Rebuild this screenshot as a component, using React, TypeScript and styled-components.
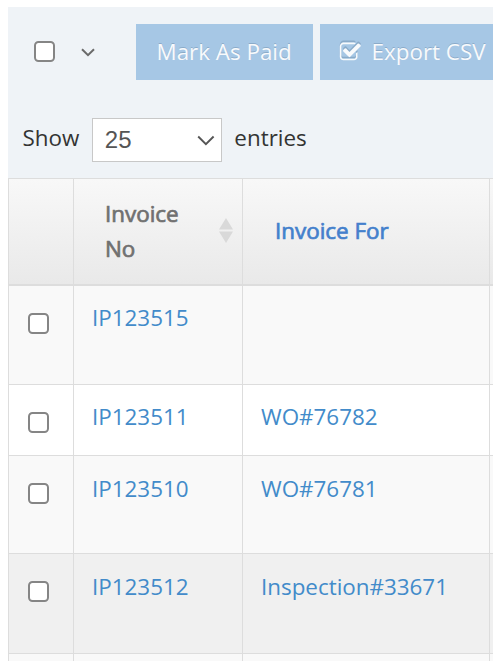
import { useState } from 'react';
import styled, { createGlobalStyle } from 'styled-components';

type Invoice = {
	no: string;
	invoiceFor: string;
	height: number;
	background: string;
};

const invoices: Invoice[] = [
	{ no: 'IP123515', invoiceFor: '', height: 99, background: '#f9f9f9' },
	{ no: 'IP123511', invoiceFor: 'WO#76782', height: 71.25, background: '#ffffff' },
	{ no: 'IP123510', invoiceFor: 'WO#76781', height: 98, background: '#f9f9f9' },
	{ no: 'IP123512', invoiceFor: 'Inspection#33671', height: 99.75, background: '#f0f0f0' },
];

function CheckSquareIcon() {
	return (
		<svg width="22.6" height="22.6" viewBox="0 0 1792 1792" fill="currentColor">
			<path d="M1472 930v318q0 119-84.5 203.5t-203.5 84.5h-832q-119 0-203.5-84.5t-84.5-203.5v-832q0-119 84.5-203.5t203.5-84.5h832q63 0 117 25 15 7 18 23 3 17-9 29l-49 49q-10 10-23 10-3 0-9-2-23-6-45-6h-832q-66 0-113 47t-47 113v832q0 66 47 113t113 47h832q66 0 113-47t47-113v-254q0-13 9-22l64-64q10-10 23-10 6 0 12 3 20 8 20 29zm231-489l-814 814q-24 24-57 24t-57-24l-430-430q-24-24-24-57t24-57l110-110q24-24 57-24t57 24l263 263 647-647q24-24 57-24t57 24l110 110q24 24 24 57t-24 57z" />
		</svg>
	);
}

function App() {
	const [selected, setSelected] = useState<string[]>([]);
	const allSelected = selected.length === invoices.length;

	const toggleAll = () => setSelected(allSelected ? [] : invoices.map((invoice) => invoice.no));
	const toggle = (no: string) =>
		setSelected((prev) => (prev.includes(no) ? prev.filter((item) => item !== no) : [...prev, no]));

	return (
		<Panel>
			<GlobalStyle />
			<Toolbar>
				<Checkbox type="checkbox" checked={allSelected} onChange={toggleAll} />
				<MenuArrow width="14" height="9" viewBox="0 0 14 9">
					<path d="M1 1.2l6 6 6-6" />
				</MenuArrow>
				<Button $width={177}>Mark As Paid</Button>
				<Button $width={190}>
					<CheckSquareIcon />
					Export CSV
				</Button>
			</Toolbar>
			<LengthRow>
				Show
				<LengthSelect>
					25
					<svg width="18" height="11" viewBox="0 0 18 11">
						<path d="M1.2 1.5l7.7 7.7 7.7-7.7" />
					</svg>
				</LengthSelect>
				entries
			</LengthRow>
			<Table>
				<HeadRow>
					<HeadCell />
					<HeadCell>
						<span>
							Invoice
							<br />
							No
						</span>
						<svg width="14" height="25" viewBox="0 0 14 25">
							<path d="M7 0l7 11.6H0zM7 25l7-11.6H0z" />
						</svg>
					</HeadCell>
					<HeadCell $active>Invoice For</HeadCell>
					<HeadCell />
				</HeadRow>
				{invoices.map((invoice) => (
					<Row key={invoice.no} $height={invoice.height} $background={invoice.background}>
						<CheckCell>
							<Checkbox
								type="checkbox"
								checked={selected.includes(invoice.no)}
								onChange={() => toggle(invoice.no)}
							/>
						</CheckCell>
						<Cell>
							<Link>{invoice.no}</Link>
						</Cell>
						<Cell>
							<Link>{invoice.invoiceFor}</Link>
						</Cell>
						<Cell />
					</Row>
				))}
				<Row $height={40} $background="#f9f9f9">
					<Cell />
					<Cell />
					<Cell />
					<Cell />
				</Row>
			</Table>
		</Panel>
	);
}

const GlobalStyle = createGlobalStyle`
	* {
		box-sizing: border-box;
	}
	body {
		margin: 0;
		background-color: #ffffff;
		overflow: hidden;
	}
`;

const Panel = styled.div`
	width: 485px;
	height: 654px;
	margin: 7px 0 0 8px;
	overflow: hidden;
	background-color: #eff3f7;
	color: #333333;
	font-family: 'Open Sans', sans-serif;
	font-size: 22.4px;
`;

const Toolbar = styled.div`
	display: flex;
	align-items: center;
	width: 540px;
	height: 74px;
	padding: 17px 0 1px 26px;
`;

const Checkbox = styled.input`
	display: block;
	appearance: none;
	flex: none;
	width: 21px;
	height: 21px;
	margin: 0;
	border: 2px solid #858585;
	border-radius: 4.5px;
	background-color: #ffffff;

	${Toolbar} > & {
		margin-bottom: 2px;
	}

	&:checked {
		background-color: #428bca;
	}
`;

const MenuArrow = styled.svg`
	margin-left: 26px;
	margin-right: 41px;
	fill: none;
	stroke: #6a6a6a;
	stroke-width: 2;
`;

const Button = styled.button<{ $width: number }>`
	display: flex;
	flex: none;
	align-items: center;
	width: ${({ $width }) => $width}px;
	height: 56px;
	margin: 0 7px 0 0;
	padding: 0 0 1px 20.5px;
	border: 0;
	background-color: #a6c7e5;
	color: #f8fafc;
	font: inherit;
	white-space: nowrap;
	text-shadow: 0 -1.5px 0 rgba(70, 100, 130, 0.28);

	svg {
		margin: 1px 10px 0 -1.5px;
		filter: drop-shadow(0 -1.5px 0 rgba(70, 100, 130, 0.28));
	}
`;

const LengthRow = styled.div`
	display: flex;
	align-items: center;
	height: 97px;
	padding: 17px 0 0 14.5px;
	line-height: 32px;
`;

const LengthSelect = styled.div`
	display: flex;
	flex: none;
	align-items: center;
	justify-content: space-between;
	width: 130px;
	height: 44px;
	margin: 3px 12.5px 0 12.5px;
	padding: 1px 6px 0 12px;
	border: 1px solid #c8c8c8;
	background-color: #ffffff;
	color: #555555;
	font-family: 'Liberation Sans', Arial, sans-serif;
	font-size: 24px;

	svg {
		fill: none;
		stroke: #555555;
		stroke-width: 1.9;
	}
`;

const Table = styled.div`
	width: 540px;
	border-top: 1px solid #dddddd;
	border-left: 1px solid #dddddd;
`;

const Row = styled.div<{ $height: number; $background: string }>`
	display: grid;
	grid-template-columns: 65px 169px 247px 1fr;
	height: ${({ $height }) => $height}px;
	border-bottom: 1px solid #dddddd;
	background-color: ${({ $background }) => $background};
`;

const HeadRow = styled.div`
	display: grid;
	grid-template-columns: 65px 169px 247px 1fr;
	height: 107px;
	border-bottom: 2px solid #dddddd;
	background: linear-gradient(#f8f8f8, #e9e9e9);
`;

const HeadCell = styled.div<{ $active?: boolean }>`
	display: flex;
	align-items: center;
	justify-content: space-between;
	padding: 0 9.5px 2px ${({ $active }) => ($active ? '32px' : '31px')};
	border-right: 1px solid #dddddd;
	color: ${({ $active }) => ($active ? '#4480cc' : '#707070')};
	line-height: 35px;
	-webkit-text-stroke: 0.7px currentColor;

	svg {
		fill: #d9d9d9;
	}
`;

const Cell = styled.div`
	padding: 16.3px 0 0 18px;
	border-right: 1px solid #dddddd;
	line-height: 32px;
`;

const CheckCell = styled.div`
	padding: 27px 0 0 18.5px;
	border-right: 1px solid #dddddd;
`;

const Link = styled.a`
	color: #428bca;
	cursor: pointer;
`;

export default App;
